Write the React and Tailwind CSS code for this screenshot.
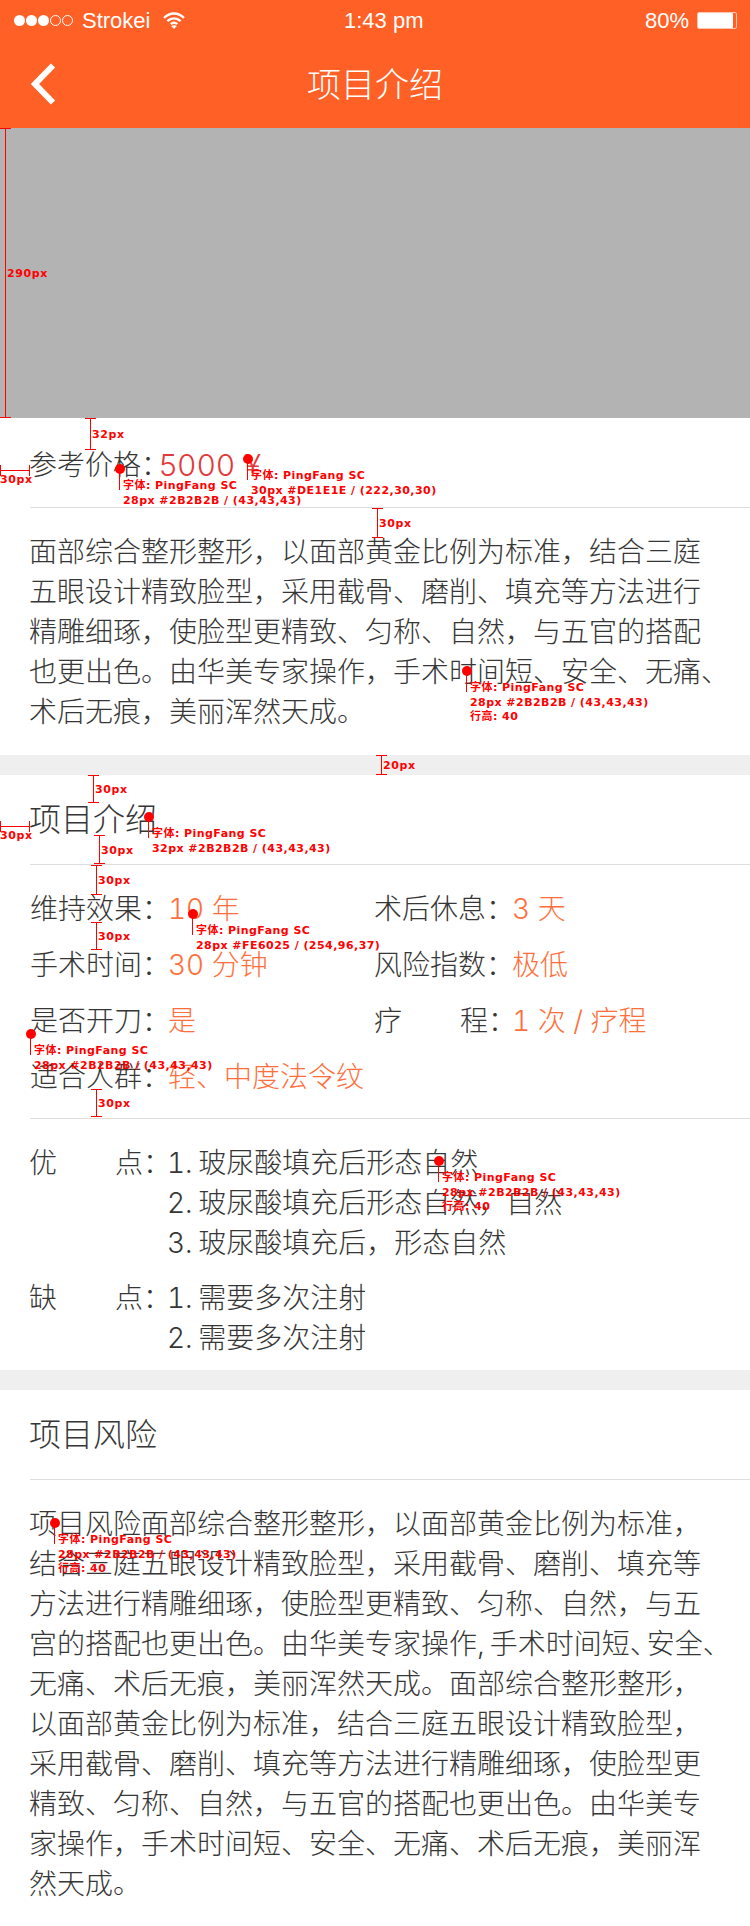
const cjk = "font-['Inter','Noto_Sans_CJK_SC',sans-serif]";

function Note({ x, y, lines, h = 21 }) {
  return (
    <div className="absolute" style={{ left: x, top: y }}>
      <div className="absolute -left-[5px] -top-[5px] h-[10px] w-[10px] rounded-full bg-[#ff0000]" />
      <div className="absolute left-[-1px] top-0 w-px bg-[#ff0000]" style={{ height: h }} />
      <div className="absolute left-[3px] top-[10px] whitespace-nowrap font-['DejaVu_Sans','Noto_Sans_CJK_SC',sans-serif] text-[11px] font-bold leading-[14.5px] tracking-[0.45px] text-[#ff0000]">
        {lines.map((l) => (
          <div key={l}>{l}</div>
        ))}
      </div>
    </div>
  );
}

function VMark({ x, y, h, label }) {
  return (
    <div className="absolute" style={{ left: x, top: y, height: h }}>
      <div className="absolute -left-[5px] top-0 h-px w-[11px] bg-[#ff0000]" />
      <div className="absolute left-0 top-0 w-px bg-[#ff0000]" style={{ height: h }} />
      <div className="absolute -left-[5px] bottom-0 h-px w-[11px] bg-[#ff0000]" />
      <div className="absolute left-[2px] top-1/2 -translate-y-1/2 font-['DejaVu_Sans',sans-serif] text-[11px] font-bold leading-none tracking-[0.6px] text-[#ff0000]">
        {label}
      </div>
    </div>
  );
}

function HMark({ y }) {
  return (
    <div className="absolute left-0 h-[11px] w-[30px]" style={{ top: y }}>
      <div className="absolute left-0 top-0 h-[11px] w-px bg-[#ff0000]" />
      <div className="absolute left-0 top-[5px] h-px w-[30px] bg-[#ff0000]" />
      <div className="absolute right-0 top-0 h-[11px] w-px bg-[#ff0000]" />
      <div className="absolute left-0 top-[9px] font-['DejaVu_Sans',sans-serif] text-[11px] font-bold leading-none tracking-[0.6px] text-[#ff0000]">
        30px
      </div>
    </div>
  );
}

function SpacedLabel({ a, b }) {
  return (
    <span className="flex w-[138px] shrink-0 whitespace-nowrap">
      <span className="w-[86px] shrink-0">{a}</span>
      <span className="w-[52px] shrink-0">{b}：</span>
    </span>
  );
}

function Info({ label, value, spaced }) {
  return (
    <div className="flex h-[28px] items-center whitespace-nowrap leading-[28px]">
      {spaced ? <SpacedLabel a={spaced[0]} b={spaced[1]} /> : <span className="w-[138px] shrink-0">{label}</span>}
      <span className="tabular-nums text-[#ff6f3c]">{value}</span>
    </div>
  );
}

function Lines({ items, className = "" }) {
  return (
    <div className={`text-[28px] font-light leading-[40px] text-[#363636] ${className}`}>
      {items.map((t, i) => (
        <div key={i} className="whitespace-nowrap">
          {t}
        </div>
      ))}
    </div>
  );
}

function ListRow({ label, items }) {
  return (
    <div className="flex text-[28px] font-light leading-[40px]">
      <SpacedLabel a={label[0]} b={label[1]} />
      <Lines items={items} className="tabular-nums [word-spacing:-2px]" />
    </div>
  );
}

export default function App() {
  return (
    <div lang="zh-CN" className={`relative h-[1926px] w-[750px] overflow-hidden bg-white text-[#363636] ${cjk}`}>
      <header className="h-[128px] bg-[#fe6025] text-white">
        <div className="grid h-[41px] grid-cols-[330px_auto_1fr] items-center pl-[14px] pr-[13px] font-['Liberation_Sans',sans-serif] text-[22px]">
          <div className="flex items-center">
            <div className="flex gap-[1px]">
              {[1, 1, 1, 0, 0].map((f, i) => (
                <span
                  key={i}
                  className={f ? "h-[11px] w-[11px] rounded-full bg-white" : "h-[11px] w-[11px] rounded-full border border-white"}
                />
              ))}
            </div>
            <span className="ml-[9px]">Strokei</span>
            <svg className="ml-[13px]" width="22" height="17" viewBox="0 0 22 17" fill="none" stroke="white" strokeWidth="2.4">
              <path d="M1 6C6.8 0 15.2 0 21 6" />
              <path d="M4.4 9.2C8.2 5.4 13.8 5.4 17.6 9.2" />
              <path d="M7.8 12.2C9.8 10.4 12.2 10.4 14.2 12.2" />
              <path d="M11 17L8.2 14C9.8 13 12.2 13 13.8 14Z" fill="white" stroke="none" />
            </svg>
          </div>
          <span>1:43 pm</span>
          <div className="flex items-center justify-end">
            <span>80%</span>
            <div className="ml-[8px] flex h-[17px] w-[40px] rounded-[2px] border border-[#ffc4ad] pr-[3px]">
              <div className="flex-1 rounded-[1px] bg-white" />
            </div>
          </div>
        </div>
        <div className="relative flex h-[87px] items-center justify-center text-[34px] font-light leading-none">
          <svg className="absolute left-[29px] top-[21px]" width="28" height="44" viewBox="0 0 28 44" fill="none" stroke="white" strokeWidth="6" strokeLinejoin="miter">
            <path d="M24 3.5L6 22L24 40.5" />
          </svg>
          项目介绍
        </div>
      </header>

      <div className="h-[290px] bg-[#b3b3b3]" />

      <section className="pl-[30px]">
        <div className="flex h-[90px] items-start border-b border-[#dedede] pt-[32px] text-[28px] font-light">
          <span className="-ml-px leading-[30px]">参考价格：</span>
          <span className="-ml-[10px] text-[30px] leading-[30px] tracking-[0.8px] text-[#e23a3a]">5000 ¥</span>
        </div>
        <div className="pb-[23px] pt-[24px]">
          <Lines
            className="-ml-px"
            items={[
              "面部综合整形整形，以面部黄金比例为标准，结合三庭",
              "五眼设计精致脸型，采用截骨、磨削、填充等方法进行",
              "精雕细琢，使脸型更精致、匀称、自然，与五官的搭配",
              "也更出色。由华美专家操作，手术时间短、安全、无痛、",
              "术后无痕，美丽浑然天成。",
            ]}
          />
        </div>
      </section>

      <div className="h-[20px] bg-[#efefef]" />

      <section className="pl-[30px]">
        <div className="flex h-[90px] items-center border-b border-[#dedede] text-[32px] font-light leading-[32px]">
          <span className="-ml-px">项目介绍</span>
        </div>
        <div className="grid grid-cols-[344px_1fr] gap-y-[28px] border-b border-[#dedede] pb-[27px] pt-[30px] text-[28px] font-light">
          <Info label="维持效果：" value="10 年" />
          <Info label="术后休息：" value="3 天" />
          <Info label="手术时间：" value="30 分钟" />
          <Info label="风险指数：" value="极低" />
          <Info label="是否开刀：" value="是" />
          <Info spaced={["疗", "程"]} value="1 次 / 疗程" />
          <div className="col-span-2">
            <Info label="适合人群：" value="轻、中度法令纹" />
          </div>
        </div>
        <div className="-ml-px flex flex-col gap-[15px] pb-[12px] pt-[24px]">
          <ListRow
            label={["优", "点"]}
            items={["1. 玻尿酸填充后形态自然", "2. 玻尿酸填充后形态自然，自然", "3. 玻尿酸填充后，形态自然"]}
          />
          <ListRow label={["缺", "点"]} items={["1. 需要多次注射", "2. 需要多次注射"]} />
        </div>
      </section>

      <div className="h-[20px] bg-[#efefef]" />

      <section className="pl-[30px]">
        <div className="flex h-[90px] items-center border-b border-[#dedede] text-[32px] font-light leading-[32px]">
          <span className="-ml-px">项目风险</span>
        </div>
        <div className="pt-[24px]">
          <Lines
            className="-ml-px"
            items={[
              "项目风险面部综合整形整形，以面部黄金比例为标准，",
              "结合三庭五眼设计精致脸型，采用截骨、磨削、填充等",
              "方法进行精雕细琢，使脸型更精致、匀称、自然，与五",
              <>
                宫的搭配也更出色。由华美专家操作<span className="[word-spacing:-3px]">, </span>手术时间短
                <span className="tracking-[-11px]">、</span>安全、
              </>,
              "无痛、术后无痕，美丽浑然天成。面部综合整形整形，",
              "以面部黄金比例为标准，结合三庭五眼设计精致脸型，",
              "采用截骨、磨削、填充等方法进行精雕细琢，使脸型更",
              "精致、匀称、自然，与五官的搭配也更出色。由华美专",
              "家操作，手术时间短、安全、无痛、术后无痕，美丽浑",
              "然天成。",
            ]}
          />
        </div>
      </section>

      <VMark x={5} y={128} h={290} label="290px" />
      <VMark x={90} y={418} h={32} label="32px" />
      <HMark y={465} />
      <VMark x={377} y={508} h={30} label="30px" />
      <VMark x={381} y={755} h={20} label="20px" />
      <VMark x={93} y={775} h={28} label="30px" />
      <HMark y={821} />
      <VMark x={99} y={835} h={29} label="30px" />
      <VMark x={96} y={865} h={30} label="30px" />
      <VMark x={96} y={922} h={28} label="30px" />
      <VMark x={96} y={1089} h={28} label="30px" />

      <Note x={120} y={469} lines={["字体: PingFang SC", "28px #2B2B2B / (43,43,43)"]} />
      <Note x={248} y={459} lines={["字体: PingFang SC", "30px #DE1E1E / (222,30,30)"]} />
      <Note x={467} y={671} lines={["字体: PingFang SC", "28px #2B2B2B / (43,43,43)", "行高: 40"]} />
      <Note x={149} y={817} lines={["字体: PingFang SC", "32px #2B2B2B / (43,43,43)"]} />
      <Note x={193} y={914} lines={["字体: PingFang SC", "28px #FE6025 / (254,96,37)"]} />
      <Note x={31} y={1034} lines={["字体: PingFang SC", "28px #2B2B2B / (43,43,43)"]} />
      <Note x={439} y={1161} lines={["字体: PingFang SC", "28px #2B2B2B / (43,43,43)", "行高: 40"]} />
      <Note x={55} y={1523} lines={["字体: PingFang SC", "28px #2B2B2B / (43,43,43)", "行高: 40"]} />
    </div>
  );
}
